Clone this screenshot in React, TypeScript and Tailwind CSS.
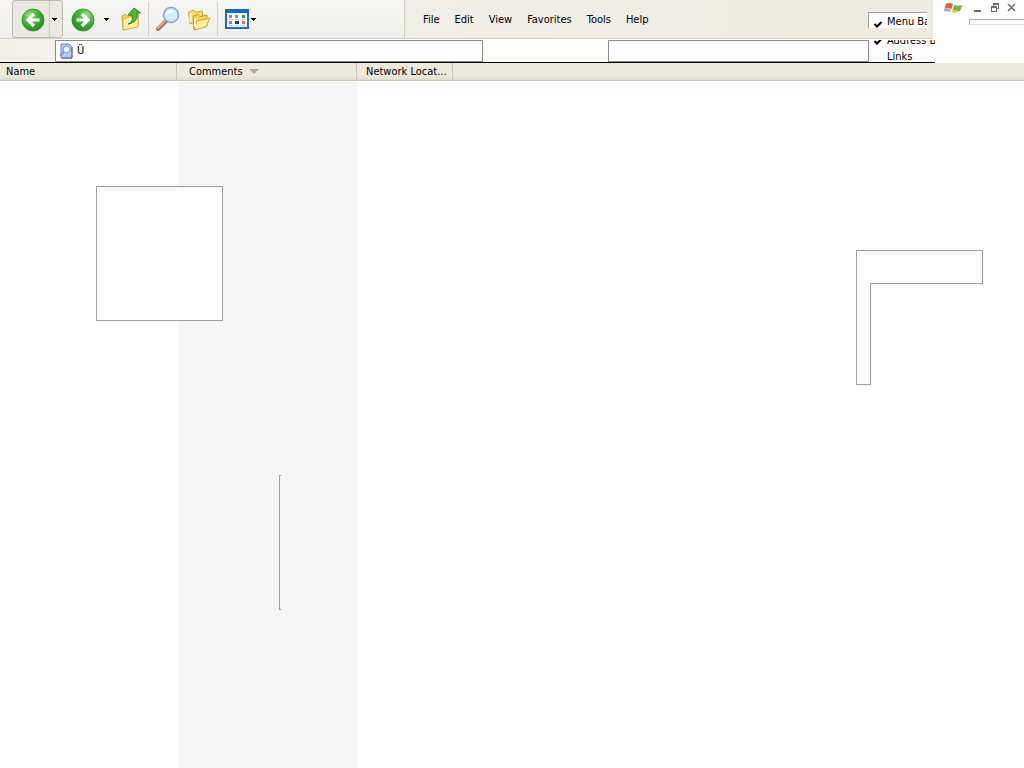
import React from "react";

function BackIcon({ flip = false }: { flip?: boolean }) {
  return (
    <svg width="24" height="24" viewBox="0 0 24 24" aria-hidden="true" className={flip ? "-scale-x-100" : ""}>
      <defs>
        <radialGradient id={flip ? "orbF" : "orbB"} cx="35%" cy="28%" r="75%">
          <stop offset="0" stopColor="#a5dc92" />
          <stop offset="0.45" stopColor="#4bb53c" />
          <stop offset="1" stopColor="#258a1c" />
        </radialGradient>
      </defs>
      <circle cx="12" cy="12" r="11" fill={flip ? "url(#orbF)" : "url(#orbB)"} stroke="#3f9438" strokeWidth="1" />
      <path d="M18.500 12H7M13 6l-6 6 6 6" fill="none" stroke="#fff" strokeWidth="3.200" />
    </svg>
  );
}

function UpFolderIcon() {
  return (
    <svg width="22" height="24" viewBox="0 0 22 24" aria-hidden="true">
      <path d="M2 9l3-2 2 2 11-2v12L3 23z" fill="#f5d568" stroke="#c9a137" />
      <path d="M3 23V12l7-2 8 0v10z" fill="#fff0a2" stroke="#d5ae48" />
      <path d="M8 17c4-1 5-4 4-9H8l6-7 6.500 5H17c1 6-2 10-9 11z" fill="#4db83e" stroke="#23831d" />
    </svg>
  );
}

function SearchIcon() {
  return (
    <svg width="26" height="26" viewBox="0 0 26 26" aria-hidden="true">
      <path d="M11 15l-8 8" stroke="#a76c50" strokeWidth="4" strokeLinecap="round" />
      <path d="M10 15l-7 7" stroke="#e1aa83" strokeWidth="2" strokeLinecap="round" />
      <circle cx="16" cy="9" r="7.500" fill="#d4effc" stroke="#7aa6d0" strokeWidth="1.500" />
      <path d="M11 9c0-3 2-5 5-5 2 0 3 1 4 2-4 0-6 1-9 3z" fill="#fff" />
    </svg>
  );
}

function FoldersIcon() {
  return (
    <svg width="24" height="24" viewBox="0 0 24 24" aria-hidden="true">
      <path d="M1.500 4l5-2 2 2 7-1v9L3 16z" fill="#f8dc6c" stroke="#d0a43a" />
      <path d="M6 8l5-1.500 2 2 7-1.500v11L7 22z" fill="#f4d158" stroke="#c8992e" />
      <path d="M7 22l3-9 13-3-4 9z" fill="#fff0a0" stroke="#d0a43a" />
      <path d="M3.500 14V6M8 19v-9" stroke="#fff4ba" strokeWidth="2" />
    </svg>
  );
}

function ViewsIcon() {
  return (
    <svg width="24" height="20" viewBox="0 0 24 20" shapeRendering="crispEdges" aria-hidden="true">
      <rect x="0" y="0" width="24" height="20" rx="1" fill="#2767b4" />
      <rect x="0" y="0" width="24" height="4" fill="#1769c8" />
      <rect x="2" y="4" width="20" height="14" fill="#f5faff" />
      <path d="M4 6h3v3H4zM17 12h3v3h-3z" fill="#c07a66" />
      <path d="M10 6h3v3h-3zM4 12h3v3H4z" fill="#7590b5" />
      <path d="M17 6h3v3h-3z" fill="#3c8650" />
      <path d="M10 12h4v3h-4z" fill="#173a86" />
      <path d="M4 10h4M10 10h4M16 10h4M4 16h4M10 16h4M16 16h4" stroke="#b8c9df" />
    </svg>
  );
}

function PageIcon() {
  return (
    <svg width="14" height="16" viewBox="0 0 14 16" aria-hidden="true" className="shrink-0">
      <path d="M2 1h8l3 3v11H2z" fill="#bccbf0" stroke="#7586bb" />
      <path d="M13 4v11H3" fill="none" stroke="#53659d" />
      <circle cx="7.500" cy="6.500" r="3.500" fill="#e6f6ff" stroke="#7898d0" />
      <path d="M5 9l-4 4" stroke="#8a9ac9" strokeWidth="2" />
    </svg>
  );
}

function Caret() {
  return (
    <svg width="5" height="3" viewBox="0 0 5 3" shapeRendering="crispEdges" aria-hidden="true">
      <path d="M0 0h5L2.500 3z" fill="#000" />
    </svg>
  );
}

function Check() {
  return (
    <svg width="8" height="7" viewBox="0 0 8 7" aria-hidden="true" className="shrink-0">
      <path d="M.5 3L3 5.500 7.500 1" fill="none" stroke="#000" strokeWidth="2" />
    </svg>
  );
}

function FlagIcon() {
  return (
    <svg width="22" height="12" viewBox="0 0 22 12" aria-hidden="true">
      <path d="M4 1.500c3-1 5-.5 7 .5l-1.500 5C7 5.500 5 6 2.500 7z" fill="#e0603a" />
      <path d="M12 3c3 1 5 1 8.500 0L18 9c-3 1-5 1-7.500 0z" fill="#72b83c" />
      <path d="M2.500 7C5 6 7 6 9 7l-1 3C6 9 4 9 1.500 9.500z" fill="#a9a7cf" />
      <path d="M10.500 7c2 1 3 1.500 5 1.500L14 11c-2 0-3-.5-5-1.500z" fill="#efc94b" />
    </svg>
  );
}

const menus = ["File", "Edit", "View", "Favorites", "Tools", "Help"];

function Toolbar() {
  return (
    <div className="flex w-[405px] shrink-0 items-center border-r border-[#cfccc1] bg-linear-to-b from-[#f7f6f4] to-[#efefec]">
      <div className="ml-3 flex h-[38px] w-[51px] rounded-[3px] border border-[#bcb9b0] bg-[#eae8e3]">
        <button aria-label="Back" className="flex w-9 items-center justify-center pt-[2px] pl-[3px]">
          <BackIcon />
        </button>
        <button aria-label="Back history" className="flex flex-1 items-center justify-center border-l border-[#d1cec7] pr-[3px]">
          <Caret />
        </button>
      </div>
      <button aria-label="Forward" className="ml-2 pt-px">
        <BackIcon flip />
      </button>
      <button aria-label="Forward history" className="ml-[7px] flex h-6 w-2 items-center justify-center">
        <Caret />
      </button>
      <button aria-label="Up" className="ml-[10px]">
        <UpFolderIcon />
      </button>
      <div className="ml-[6px] h-[34px] w-px bg-[#d1cfc8]" />
      <button aria-label="Search" className="ml-[6px]">
        <SearchIcon />
      </button>
      <button aria-label="Folders" className="ml-[6px] pt-px">
        <FoldersIcon />
      </button>
      <div className="ml-[6px] h-[34px] w-px bg-[#d1cfc8]" />
      <button aria-label="Views" className="ml-[7px] flex items-center gap-[2px]">
        <ViewsIcon />
        <Caret />
      </button>
    </div>
  );
}

function AddressRow() {
  return (
    <div className="flex h-6 border-b border-black bg-[#fefefc]">
      <div className="w-[55px] shrink-0 bg-linear-to-r from-[#f0efe9] to-[#f2f1ec]" />
      <label className="mt-px flex h-[22px] w-[428px] shrink-0 items-center border border-[#8b8b88] bg-white pl-[3px]">
        <PageIcon />
        <input
          aria-label="Address"
          defaultValue="Ü"
          className="ml-1 w-full min-w-0 bg-transparent text-[11px] leading-[14px] outline-none"
        />
      </label>
      <input
        aria-label="Location"
        className="mt-px ml-[125px] h-[22px] min-w-0 flex-1 border border-[#8b8b88] bg-white px-1 outline-none"
      />
      <div className="mt-px flex w-[66px] shrink-0 flex-col justify-end overflow-hidden pl-[5px] whitespace-nowrap">
        <div className="flex h-4 shrink-0 items-center gap-[5px] leading-4">
          <Check />
          <span>Address Bar</span>
        </div>
        <div className="h-[13px] shrink-0 pl-[13px] leading-4">Links</div>
      </div>
    </div>
  );
}

function WindowControls() {
  return (
    <div className="w-[89px] shrink-0 bg-[#fefefe]">
      <div className="flex h-[19px] items-center pb-[3px] pl-[7px]">
        <FlagIcon />
        <div className="ml-2 flex gap-[5px] text-[#6d6d6d]">
          <button aria-label="Minimize">
            <svg width="12" height="12" viewBox="0 0 12 12" aria-hidden="true">
              <path d="M2 9h7" stroke="currentColor" strokeWidth="2" />
            </svg>
          </button>
          <button aria-label="Restore">
            <svg width="12" height="12" viewBox="0 0 12 12" shapeRendering="crispEdges" aria-hidden="true">
              <path d="M4.500 4V1.500h5v5H8M4 2.500h6M2.500 4.500h5v5h-5zM2 5.500h6" fill="none" stroke="currentColor" />
            </svg>
          </button>
          <button aria-label="Close">
            <svg width="12" height="12" viewBox="0 0 12 12" aria-hidden="true">
              <path d="M2 2l7 7M9 2l-7 7" stroke="currentColor" strokeWidth="1.500" />
            </svg>
          </button>
        </div>
      </div>
      <div className="ml-[34px] h-[6px] border-y border-l border-[#a9a9ae] border-b-[#dedede]" />
    </div>
  );
}

export default function App() {
  return (
    <div className="flex min-h-screen flex-col bg-[#fefefe] font-['DejaVu_Sans_Condensed','DejaVu_Sans',sans-serif] text-[11px] leading-[14px] text-black">
      <header className="flex">
        <div className="min-w-0 flex-1">
          <div className="mr-[2px] flex h-[39px] border-b border-[#d5d2c7]">
            <Toolbar />
            <nav className="flex min-w-0 flex-1 items-center bg-linear-to-r from-[#efeee9] to-[#eeebdf] pl-[18px]">
              <div className="flex gap-[15px] pt-[2px]">
                {menus.map((menu) => (
                  <button key={menu}>{menu}</button>
                ))}
              </div>
              <div className="mt-[2px] mr-[6px] ml-auto flex h-4 w-[59px] shrink-0 items-end gap-[5px] overflow-hidden border-t border-l border-[#a3a19b] bg-white pl-[5px] leading-3 whitespace-nowrap">
                <Check />
                <span>Menu Bar</span>
              </div>
            </nav>
          </div>
          <AddressRow />
        </div>
        <WindowControls />
      </header>

      <div className="grid h-[18px] shrink-0 grid-cols-[177px_180px_96px_1fr] border-b border-[#cbc7b8] bg-linear-to-b from-[#ebeadb] from-75% to-[#dedbcd] text-left">
        <button className="border-r border-[#c7c5b2] pl-[6px] text-left">Name</button>
        <button className="flex items-center gap-[6px] border-r border-[#c7c5b2] pl-3">
          Comments
          <svg width="10" height="5" viewBox="0 0 10 5" aria-hidden="true">
            <path d="M0 0h10L5 5z" fill="#aca899" />
          </svg>
        </button>
        <button className="overflow-hidden border-r border-[#c7c5b2] pl-[9px] text-left whitespace-nowrap">Network Locat...</button>
      </div>

      <main className="relative grid flex-1 grid-cols-[178px_180px_1fr] overflow-hidden">
        <div />
        <div className="bg-[#f6f6f6]" />
        <div />
        <svg
          width="127"
          height="135"
          viewBox="0 0 127 135"
          shapeRendering="crispEdges"
          className="absolute top-[105px] left-24"
          aria-hidden="true"
        >
          <path d="M.5.5h126v134H.5z" fill="#fefefe" stroke="#a0a0a0" />
        </svg>
        <svg
          width="3"
          height="135"
          viewBox="0 0 3 135"
          shapeRendering="crispEdges"
          className="absolute top-[394px] left-[279px]"
          aria-hidden="true"
        >
          <path d="M2 .5H.5v134H2" fill="none" stroke="#a0a0a0" />
        </svg>
        <svg
          width="127"
          height="135"
          viewBox="0 0 127 135"
          shapeRendering="crispEdges"
          className="absolute top-[169px] left-[856px]"
          aria-hidden="true"
        >
          <path d="M.5.5h126v33h-112v101H.5z" fill="#fefefe" stroke="#a0a0a0" />
        </svg>
      </main>
    </div>
  );
}
